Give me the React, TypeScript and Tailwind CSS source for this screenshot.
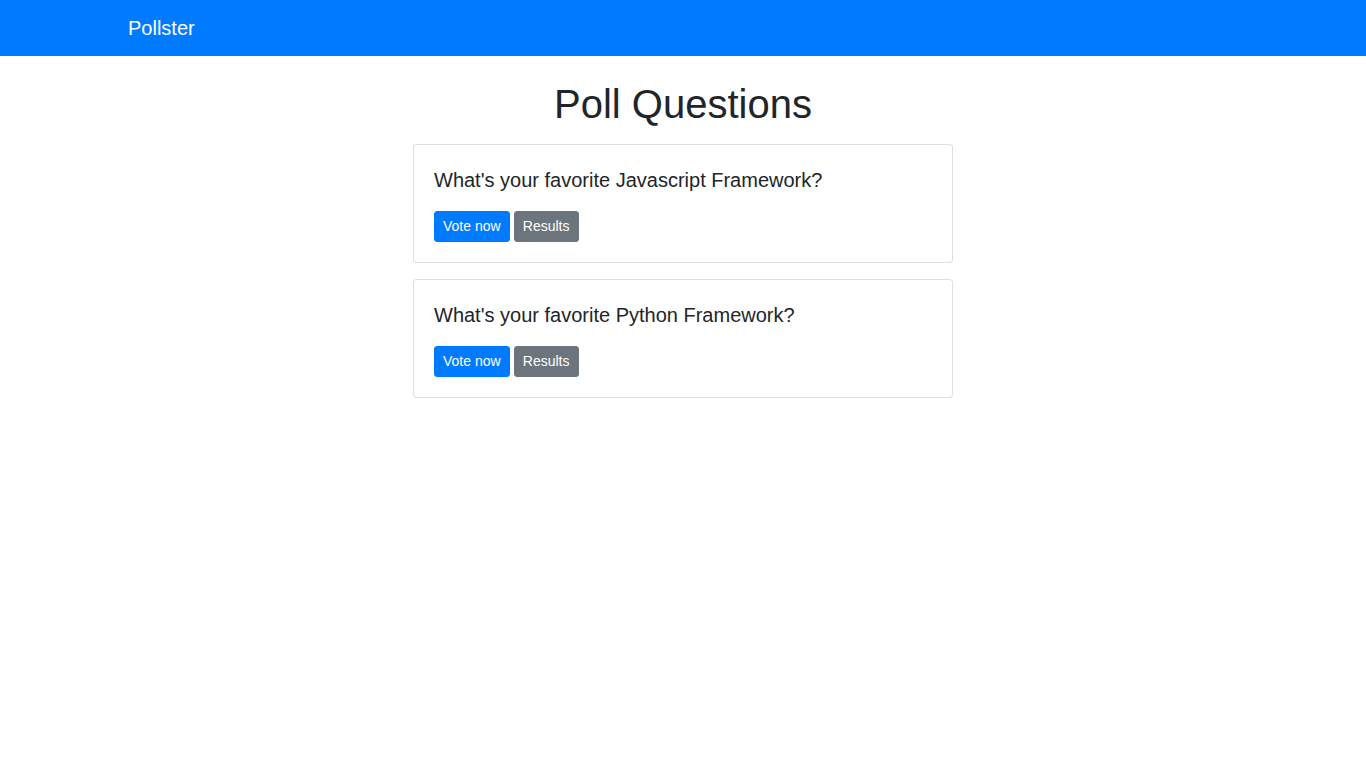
const polls = [
  { id: 1, question: "What's your favorite Javascript Framework?" },
  { id: 2, question: "What's your favorite Python Framework?" },
];

export default function App() {
  return (
    <div className="min-h-screen bg-white font-['Liberation_Sans',Arial,sans-serif] text-[#212529]">
      <nav className="h-14 bg-[#007bff]">
        <div className="mx-auto flex h-full max-w-[1140px] items-center px-[15px]">
          <a href="#" className="text-[20px] leading-[30px] text-white">
            Pollster
          </a>
        </div>
      </nav>

      <main className="mx-auto max-w-[1140px] px-[15px]">
        <div className="mx-auto w-[540px]">
          <h1 className="mt-6 mb-4 text-center text-[40px] leading-[48px] font-medium">
            Poll Questions
          </h1>

          {polls.map((poll) => (
            <div
              key={poll.id}
              className="mb-4 rounded border border-[rgba(0,0,0,0.125)] bg-white p-5"
            >
              <h5 className="mt-[3px] mb-[19px] text-[20px] leading-[24px] font-normal">
                {poll.question}
              </h5>
              <div className="flex gap-1">
                <a
                  href="#"
                  className="rounded-[3px] border border-[#007bff] bg-[#007bff] px-2 py-1 text-[14px] leading-[21px] text-white"
                >
                  Vote now
                </a>
                <a
                  href="#"
                  className="w-[65px] rounded-[3px] border border-[#6c757d] bg-[#6c757d] py-1 text-center text-[14px] leading-[21px] text-white"
                >
                  Results
                </a>
              </div>
            </div>
          ))}
        </div>
      </main>
    </div>
  );
}
